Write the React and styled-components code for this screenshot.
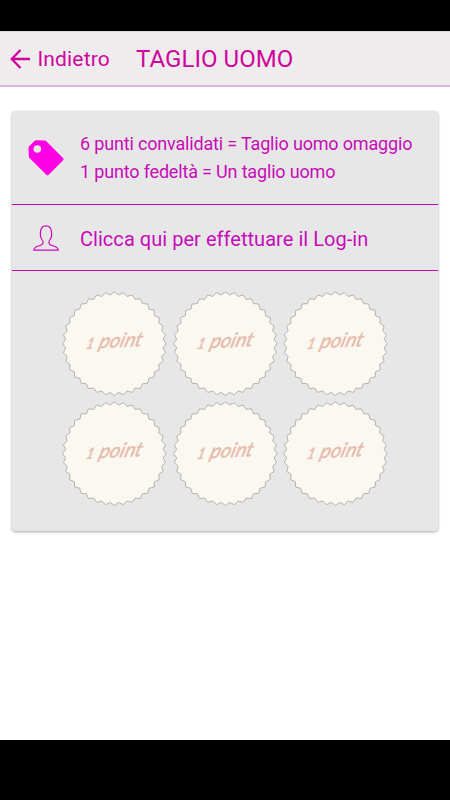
import React from "react";
import styled, { createGlobalStyle } from "styled-components";

const GlobalStyle = createGlobalStyle`
  * { box-sizing: border-box; }
  body { margin: 0; background: #fff; font-family: Roboto, "Liberation Sans", sans-serif; }
`;

const Screen = styled.div`
  width: 450px;
  height: 800px;
  display: flex;
  flex-direction: column;
  background: #fff;
  overflow: hidden;
`;

const SystemBar = styled.div`
  flex: none;
  height: ${(p) => p.$height}px;
  background: #000;
`;

const Header = styled.header`
  flex: none;
  height: 56px;
  display: flex;
  align-items: center;
  padding-left: 10px;
  background: #efeced;
  border-top: 1px solid #dcd9da;
  border-bottom: 2px solid #dfb4df;
  color: #d0049c;
`;

const BackButton = styled.button`
  width: 126px;
  display: flex;
  align-items: center;
  gap: 6.5px;
  padding: 0;
  border: 0;
  background: none;
  color: inherit;
  font: 400 21px/28px Roboto, sans-serif;
  letter-spacing: 0.15px;
  white-space: nowrap;
`;

const Title = styled.h1`
  margin: 0;
  font-size: 24px;
  font-weight: 400;
  line-height: 28px;
  letter-spacing: ${(p) => p.$tracking}px;
  white-space: nowrap;
`;

const Main = styled.main`
  flex: 1;
  padding: 24px 12px 0;
`;

const Card = styled.section`
  height: 420px;
  border-radius: 4px;
  background: #e7e7e7;
  box-shadow: 0 1px 3px rgba(0, 0, 0, 0.35);
  color: #c80ab8;
`;

const Row = styled.div`
  height: ${(p) => p.$height}px;
  display: flex;
  align-items: center;
  border-bottom: 1px solid #bc06ae;
`;

const IconSlot = styled.div`
  flex: none;
  width: 68px;
  display: flex;
  justify-content: center;
`;

const RowText = styled.div`
  font-size: ${(p) => p.$size}px;
  line-height: ${(p) => p.$leading}px;
  letter-spacing: ${(p) => p.$tracking}px;
  padding-top: ${(p) => p.$drop || 0}px;
  white-space: nowrap;
`;

const Stamps = styled.div`
  display: grid;
  grid-template-columns: 107px 106px 106px;
  gap: 4px;
  padding: 20px 0 0 49px;
`;

const StampSvg = styled.svg`
  display: block;
  width: 106px;
  height: 106px;
`;

const StampLabel = styled.text`
  font-family: Lato, sans-serif;
  font-size: ${(p) => p.$size}px;
  font-weight: 400;
  font-style: italic;
  fill: #e6bbab;
  stroke: #e6bbab;
  stroke-width: 0.4px;
`;

const TEETH = 36;
const sealPoints = Array.from({ length: TEETH * 2 }, (_, i) => {
  const angle = (i * Math.PI) / TEETH - Math.PI / 2;
  const radius = i % 2 ? 48.9 : 51.8;
  return `${(53.4 + radius * Math.cos(angle)).toFixed(2)},${(52.7 + radius * Math.sin(angle)).toFixed(2)}`;
}).join(" ");

function Stamp() {
  return (
    <StampSvg viewBox="0 0 106 106">
      <polygon points={sealPoints} fill="#fbf8f1" stroke="#a5a49f" strokeWidth="0.8" />
      <g transform="translate(24 58) rotate(-3) skewX(-19)">
        <StampLabel $size={15} textLength="8" lengthAdjust="spacingAndGlyphs">1</StampLabel>
        <StampLabel $size={20} x="13" textLength="43" lengthAdjust="spacingAndGlyphs">point</StampLabel>
      </g>
    </StampSvg>
  );
}

function BackArrow() {
  return (
    <svg width="21" height="20" viewBox="0 0 21 20" fill="none" stroke="currentColor" strokeWidth="2.3">
      <path d="M20 10H2M10.5 1L1.7 10l8.8 9" />
    </svg>
  );
}

function TagIcon() {
  return (
    <svg width="36" height="36" viewBox="0 0 36 36">
      <path
        fill="#ff00e4"
        fillRule="evenodd"
        d="M1 6.5L6.2 1.3Q7.1.3 8.2.3L16.5.5Q17.7.5 18.6 1.4L35 18Q36.2 19.2 35 20.4L20.7 34.8Q19.5 35.9 18.3 34.8L2 18.5Q1 17.5.9 16.2L.5 8.2Q.4 7.2 1 6.5ZM9.3 5.2a3.8 3.8 0 1 0 0 7.6 3.8 3.8 0 0 0 0-7.6Z"
      />
    </svg>
  );
}

function UserIcon() {
  return (
    <svg width="26" height="26" viewBox="0 0 26 26" fill="none" stroke="#c90abc" strokeWidth="1.2">
      <path d="M.8 25.2C.8 21.2 5 21.6 8.3 20c2.4-1.2 2.2-3.5.6-5.5C7.4 12.6 7.1 9.8 7.5 6.7 7.9 3 9.8.8 13 .8s5.1 2.2 5.5 5.9c.4 3.1.1 5.9-1.4 7.8-1.6 2-1.8 4.3.6 5.5 3.3 1.6 7.5 1.2 7.5 5.2Z" />
    </svg>
  );
}

export default function App() {
  return (
    <>
      <GlobalStyle />
      <Screen>
        <SystemBar $height={31} />
        <Header>
          <BackButton>
            <BackArrow />
            <span>Indietro</span>
          </BackButton>
          <Title $tracking={0.05}>TAGLIO UOMO</Title>
        </Header>
        <Main>
          <Card>
            <Row $height={94}>
              <IconSlot><TagIcon /></IconSlot>
              <RowText $size={18} $leading={27.5} $tracking={-0.17}>
                6 punti convalidati = Taglio uomo omaggio
                <br />
                1 punto fedeltà = Un taglio uomo
              </RowText>
            </Row>
            <Row $height={66}>
              <IconSlot><UserIcon /></IconSlot>
              <RowText $size={20} $leading={28} $tracking={0.04} $drop={2}>
                Clicca qui per effettuare il Log-in
              </RowText>
            </Row>
            <Stamps>
              {[1, 2, 3, 4, 5, 6].map((n) => <Stamp key={n} />)}
            </Stamps>
          </Card>
        </Main>
        <SystemBar $height={60} />
      </Screen>
    </>
  );
}
